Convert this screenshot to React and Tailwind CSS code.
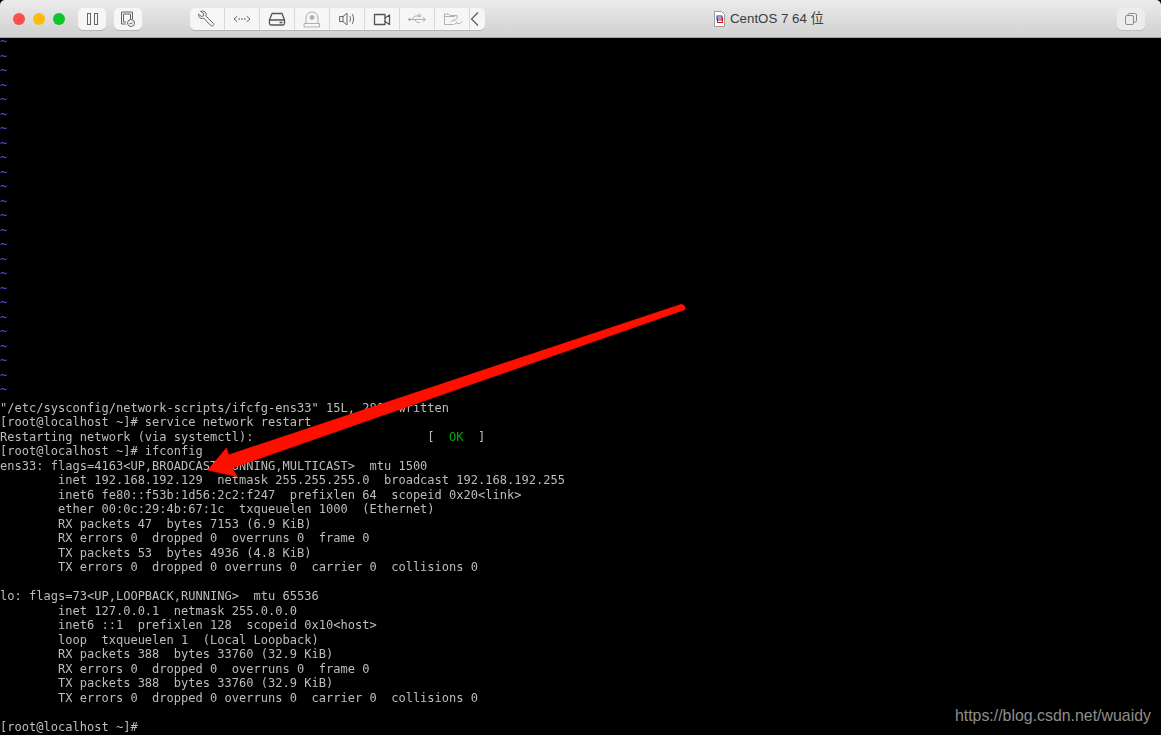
import React from 'react';

const tildeRows = Array.from({ length: 25 });

const outputLines = [
  '"/etc/sysconfig/network-scripts/ifcfg-ens33" 15L, 280C written',
  '[root@localhost ~]# service network restart',
  'OK_LINE',
  '[root@localhost ~]# ifconfig',
  'ens33: flags=4163<UP,BROADCAST,RUNNING,MULTICAST>  mtu 1500',
  '        inet 192.168.192.129  netmask 255.255.255.0  broadcast 192.168.192.255',
  '        inet6 fe80::f53b:1d56:2c2:f247  prefixlen 64  scopeid 0x20<link>',
  '        ether 00:0c:29:4b:67:1c  txqueuelen 1000  (Ethernet)',
  '        RX packets 47  bytes 7153 (6.9 KiB)',
  '        RX errors 0  dropped 0  overruns 0  frame 0',
  '        TX packets 53  bytes 4936 (4.8 KiB)',
  '        TX errors 0  dropped 0 overruns 0  carrier 0  collisions 0',
  '',
  'lo: flags=73<UP,LOOPBACK,RUNNING>  mtu 65536',
  '        inet 127.0.0.1  netmask 255.0.0.0',
  '        inet6 ::1  prefixlen 128  scopeid 0x10<host>',
  '        loop  txqueuelen 1  (Local Loopback)',
  '        RX packets 388  bytes 33760 (32.9 KiB)',
  '        RX errors 0  dropped 0  overruns 0  frame 0',
  '        TX packets 388  bytes 33760 (32.9 KiB)',
  '        TX errors 0  dropped 0 overruns 0  carrier 0  collisions 0',
  '',
  '[root@localhost ~]#',
];

const Ico = ({ children, dim }) => (
  <svg width="24" height="22" viewBox="0 0 24 22" fill="none" stroke={dim ? '#b0b0b0' : '#666'} strokeWidth="1" strokeLinecap="round" strokeLinejoin="round">
    {children}
  </svg>
);

const toolIcons = [
  <Ico key="wrench">
    <path d="M6 3.500l2.800 2.400-.4 2-2 .6-2.800-2.300c-.2 2 .6 3.500 2.200 4.100 1.200.4 2.200.3 3-.1l6.800 7.200c.9.8 1.900.8 2.600.1.700-.7.600-1.700-.1-2.500l-7.200-6.900c.4-1 .4-2.100 0-3-.8-1.800-2.900-2.500-4.900-1.600z" />
  </Ico>,
  <Ico key="net">
    <path d="M7 8.500l-3 2.500 3 2.500M17 8.500l3 2.500-3 2.500" />
    <path d="M9 11h.4M11.800 11h.4M14.600 11h.4" strokeWidth="1.300" />
  </Ico>,
  <Ico key="disk">
    <path d="M7 5.500h10l2.500 6.500v3.500a1.500 1.500 0 0 1-1.500 1.500H6a1.500 1.500 0 0 1-1.500-1.500V12z" stroke="#555" strokeWidth="1.300" />
    <path d="M4.500 12h15M15 14.500h2" stroke="#555" strokeWidth="1.300" />
  </Ico>,
  <Ico key="cd" dim>
    <path d="M6 15.500V10a6 6 0 0 1 12 0v5.500" />
    <circle cx="12" cy="9.500" r="2" fill="#b0b0b0" />
    <path d="M4.500 15.500h15v3.500h-15z" />
  </Ico>,
  <Ico key="sound">
    <path d="M5 8.500h3l4-3.500v12l-4-3.500H5z" />
    <path d="M8 8.500v5" />
    <path d="M15 8.500c.7 1.500.7 3.500 0 5M17.500 6.500c1.400 2.800 1.400 6.200 0 9" />
  </Ico>,
  <Ico key="video">
    <path d="M4.500 6.500h10.500v10H4.500z" stroke="#555" strokeWidth="1.300" />
    <path d="M15 10l4.500-3v9.500L15 13.500" stroke="#555" strokeWidth="1.300" />
  </Ico>,
  <Ico key="usb" dim>
    <path d="M3.500 11.500h16" />
    <path d="M6.500 11.500l3.500-3.500h3M9 11.500l3.500 3h2" />
    <path d="M18 9.500l2.500 2-2.500 2" />
    <circle cx="4.500" cy="11.500" r="1" fill="#b0b0b0" />
    <path d="M13.500 6.800h1.800v2h-1.800z" />
  </Ico>,
  <Ico key="folder" dim>
    <path d="M13 16.500H4.500V6h4l1.500 1.500h7v3" />
    <path d="M4.500 8.500h10" />
    <path d="M11 14l2-2h3M22 13.500l-2 2h-3" />
    <path d="M14.500 16.500l2.500-2.500" />
  </Ico>,
];

const Toolbar = () => (
  <div className="flex h-[38px] shrink-0 items-center rounded-t-[5px] border-b border-[#a6a6a6] bg-gradient-to-b from-[#ebebeb] to-[#d0d0d0] pl-[13px] pr-[16px]">
    <div className="flex items-center gap-[8px]">
      <span className="size-[12px] rounded-full bg-[#fb4f4c]" />
      <span className="size-[12px] rounded-full bg-[#fdbc0a]" />
      <span className="size-[12px] rounded-full bg-[#0dc52c]" />
    </div>

    <button className="ml-[13px] flex h-[22px] w-[28px] items-center justify-center gap-[3px] rounded-[5px] bg-[#f6f6f6] shadow-[0_1px_0_#b5b5b5]">
      <span className="h-[12px] w-[4px] border border-[#666]" />
      <span className="h-[12px] w-[4px] border border-[#666]" />
    </button>

    <button className="ml-[8px] flex h-[22px] w-[28px] items-center justify-center rounded-[5px] bg-[#f6f6f6] shadow-[0_1px_0_#b5b5b5]">
      <svg width="22" height="20" viewBox="0 0 22 20" fill="none" stroke="#666" strokeWidth="1">
        <path d="M9 15H4.500V3h11v7" />
        <path d="M6.500 5h7v5.500M6.500 5v8H9" />
        <circle cx="14" cy="14" r="3.500" />
        <path d="M12.500 14.500l1.500.2 1.500-1.200" />
      </svg>
    </button>

    <div className="ml-[48px] flex h-[22px] rounded-[5px] bg-[#f6f6f6] shadow-[0_1px_0_#b5b5b5]">
      {toolIcons.map((icon) => (
        <div key={icon.key} className="flex w-[35px] items-center justify-center border-r border-[#d8d8d8]">
          {icon}
        </div>
      ))}
      <div className="flex w-[15px] items-center justify-start">
        <svg width="10" height="16" viewBox="0 0 10 16" fill="none" stroke="#5a5a5a" strokeWidth="1.200">
          <path d="M8 1.500L1.500 8 8 14.500" />
        </svg>
      </div>
    </div>

    <div className="ml-[229px] flex items-center gap-[5px] text-[13.3px] text-[#3c3c3c] [font-family:'Liberation_Sans','Noto_Sans_CJK_SC',sans-serif]">
      <svg width="11" height="16" viewBox="0 0 11 16">
        <path d="M.5.500h7l3 3v12H.500z" fill="#fff" stroke="#9a9a9a" />
        <rect x="3" y="5" width="5" height="4" fill="none" stroke="#2233bb" />
        <rect x="3.500" y="7" width="5" height="4.500" fill="none" stroke="#e01010" />
      </svg>
      <span>CentOS 7 64 位</span>
    </div>

    <button className="ml-auto flex h-[22px] w-[28px] items-center justify-center rounded-[5px] bg-[#ececec] shadow-[0_1px_0_#c0c0c0]">
      <svg width="14" height="14" viewBox="0 0 14 14" fill="none" stroke="#8c8c8c" strokeWidth="1">
        <rect x="1.500" y="3.500" width="8" height="9" rx="1.500" />
        <path d="M4 3.500V2.800A1.300 1.300 0 0 1 5.300 1.500h6A1.300 1.300 0 0 1 12.500 2.800v6a1.300 1.300 0 0 1-1.300 1.300h-1.700" />
      </svg>
    </button>
  </div>
);

const App = () => {
  return (
    <div className="relative flex h-screen w-full flex-col overflow-hidden bg-black">
      <Toolbar />

      <div className="flex-1 text-[12.04px] leading-[14.5px] text-[#bdbdbd] blur-[0.3px] [font-family:'DejaVu_Sans_Mono','Liberation_Mono',monospace]">
        {tildeRows.map((_, i) => (
          <div key={i} className="h-[14.5px] -translate-y-[4.5px] font-bold text-[#5044e0]">~</div>
        ))}
        {outputLines.map((line, i) =>
          line === 'OK_LINE' ? (
            <div key={i} className="h-[14.5px] whitespace-pre">
              {'Restarting network (via systemctl):                        [  '}
              <span className="text-[#00a800]">OK</span>
              {'  ]'}
            </div>
          ) : (
            <div key={i} className="h-[14.5px] whitespace-pre">{line}</div>
          )
        )}
      </div>

      {/* red annotation arrow drawn over the terminal */}
      <svg className="absolute left-0 top-0" width="1161" height="735" viewBox="0 0 1161 735">
        <path
          d="M681 304.500Q686 305 685 309.500L232 468L237 476.500L208 470L226.500 448L228.500 455z"
          fill="#fe0f00"
          stroke="#fe0f00"
          strokeWidth="0.800"
          strokeLinejoin="round"
        />
      </svg>

      <div className="absolute bottom-[10px] right-[10px] text-[15.9px] leading-[18px] text-[#8e8e8e] [font-family:'Liberation_Sans',sans-serif]">
        https://blog.csdn.net/wuaidy
      </div>
    </div>
  );
};

export default App;
